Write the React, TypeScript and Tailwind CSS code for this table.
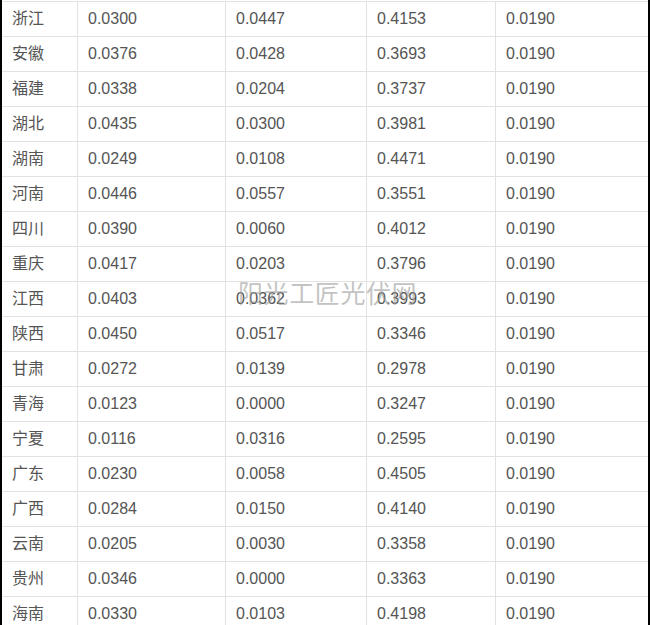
const rows = [
  ["浙江", "0.0300", "0.0447", "0.4153", "0.0190"],
  ["安徽", "0.0376", "0.0428", "0.3693", "0.0190"],
  ["福建", "0.0338", "0.0204", "0.3737", "0.0190"],
  ["湖北", "0.0435", "0.0300", "0.3981", "0.0190"],
  ["湖南", "0.0249", "0.0108", "0.4471", "0.0190"],
  ["河南", "0.0446", "0.0557", "0.3551", "0.0190"],
  ["四川", "0.0390", "0.0060", "0.4012", "0.0190"],
  ["重庆", "0.0417", "0.0203", "0.3796", "0.0190"],
  ["江西", "0.0403", "0.0362", "0.3993", "0.0190"],
  ["陕西", "0.0450", "0.0517", "0.3346", "0.0190"],
  ["甘肃", "0.0272", "0.0139", "0.2978", "0.0190"],
  ["青海", "0.0123", "0.0000", "0.3247", "0.0190"],
  ["宁夏", "0.0116", "0.0316", "0.2595", "0.0190"],
  ["广东", "0.0230", "0.0058", "0.4505", "0.0190"],
  ["广西", "0.0284", "0.0150", "0.4140", "0.0190"],
  ["云南", "0.0205", "0.0030", "0.3358", "0.0190"],
  ["贵州", "0.0346", "0.0000", "0.3363", "0.0190"],
  ["海南", "0.0330", "0.0103", "0.4198", "0.0190"],
];

export default function App() {
  return (
    <div className="flex h-[625px] w-[650px] overflow-hidden bg-white font-['Liberation_Sans','Noto_Sans_CJK_SC',sans-serif]">
      <div className="w-[2px] shrink-0 bg-black" />
      <div className="relative flex-1 pt-px">
        <div className="grid grid-cols-[75px_148px_141px_129px_1fr] border-t border-[#e2e2e2] text-[16px] text-[#555]">
          {rows.map((r) =>
            r.map((cell, i) => (
              <div
                key={r[0] + i}
                className={`flex h-[35px] items-center border-b border-[#e2e2e2] px-[10px] ${i > 0 ? "border-l" : ""}`}
              >
                {cell}
              </div>
            ))
          )}
        </div>
        {/* watermark */}
        <div className="pointer-events-none absolute left-[236px] top-[274px] text-[25px] tracking-[0.6px] text-[#9a9a9a]/60 font-['Noto_Sans_CJK_SC',sans-serif]">
          阳光工匠光伏网
        </div>
      </div>
      <div className="w-[2px] shrink-0 bg-black" />
    </div>
  );
}
